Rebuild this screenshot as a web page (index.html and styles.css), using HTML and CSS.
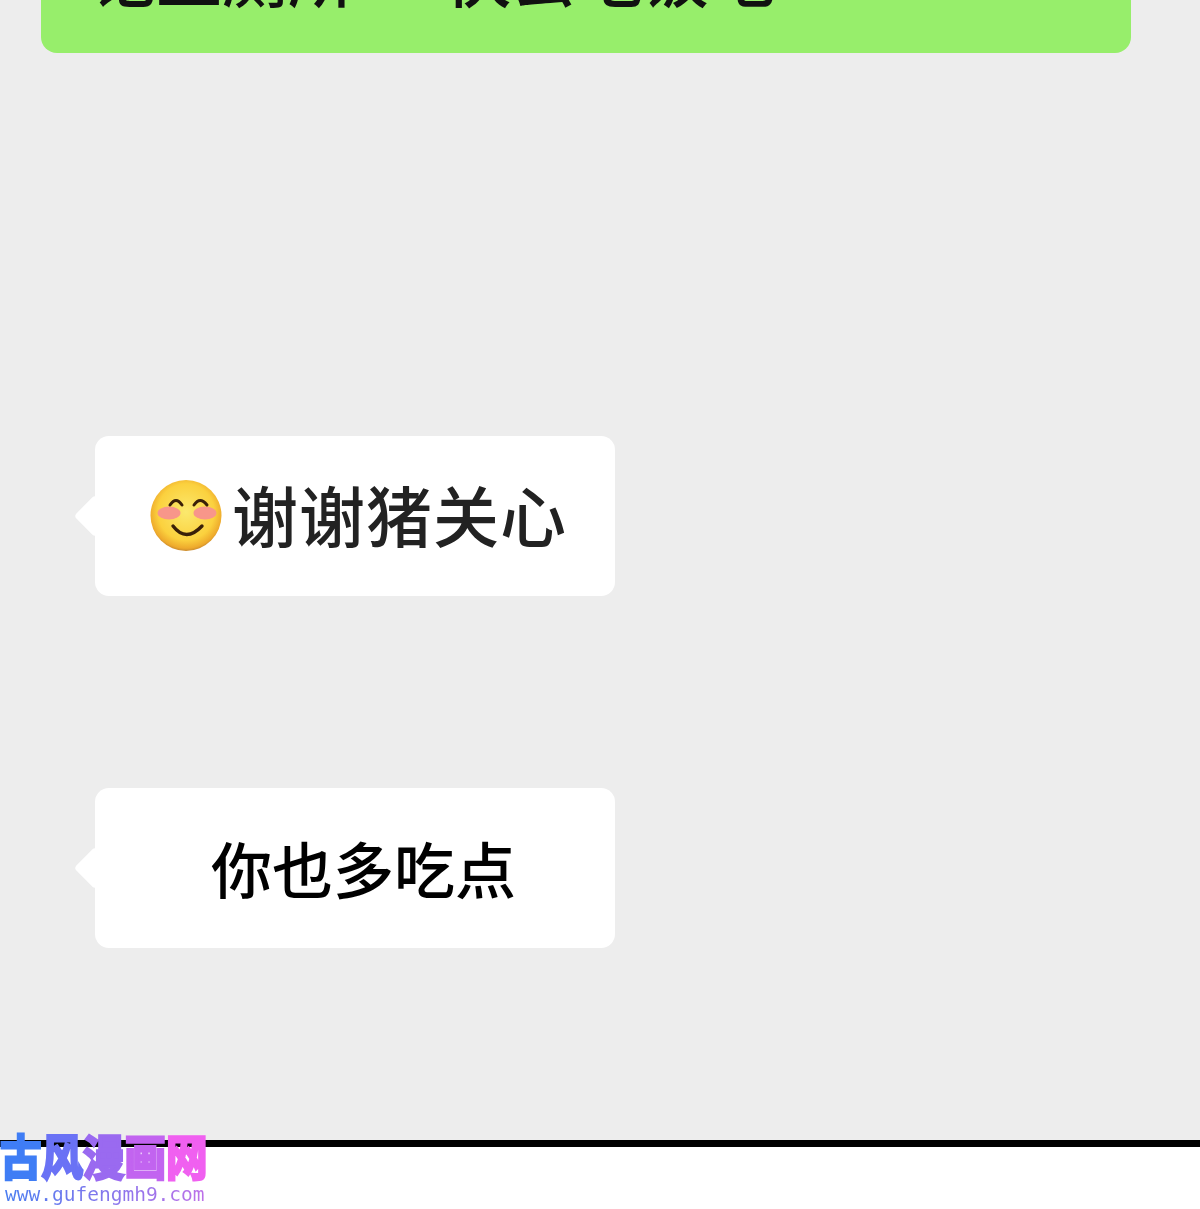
FILE: index.html
```html
<!DOCTYPE html>
<html lang="zh-CN">
<head>
  <meta charset="UTF-8" />
  <title>古风漫画网</title>
  <link rel="stylesheet" href="styles.css">
</head>
<body>
  <div class="chat">
    <div class="sent">
      <p class="sent-text">记上厕所<span class="sent-gap">快去吃饭吧</span></p>
    </div>

    <div class="msg msg-first">
      <div class="msg-body">
        <svg class="emoji" viewBox="0 0 72 72" aria-hidden="true">
          <defs>
            <radialGradient id="face" cx="50%" cy="45%" r="55%">
              <stop offset="0" stop-color="#fbe96e"/>
              <stop offset="0.72" stop-color="#fbd13e"/>
              <stop offset="0.93" stop-color="#eeaa2c"/>
              <stop offset="1" stop-color="#c98a2e"/>
            </radialGradient>
          </defs>
          <circle cx="36" cy="35.5" r="35.5" fill="url(#face)"/>
          <ellipse cx="19" cy="33" rx="11.5" ry="6.5" fill="#f8968a"/>
          <ellipse cx="55" cy="33" rx="11.5" ry="6.5" fill="#f8968a"/>
          <path d="M20 25q6-9 12 0M44 25q6-9 13 0" fill="none" stroke="#3a2008" stroke-width="3" stroke-linecap="round"/>
          <path d="M23 46q13 17 29 0" fill="none" stroke="#3a2008" stroke-width="3.4" stroke-linecap="round"/>
        </svg>
        <span class="msg-text thanks">谢谢猪关心</span>
      </div>
    </div>

    <div class="msg msg-second">
      <div class="msg-body center">
        <span class="msg-text">你也多吃点</span>
      </div>
    </div>
  </div>

  <div class="footer">
    <div class="mark">
      <div class="mark-title"><span class="c1">古</span><span class="c2">风</span><span class="c3">漫</span><span class="c4">画</span><span class="c5">网</span></div>
      <div class="mark-url">www.gufengmh9.com</div>
    </div>
  </div>
</body>
</html>
```

FILE: styles.css
```css
html, body { margin: 0; padding: 0; }
body { width: 1200px; height: 1209px; overflow: hidden; background: #fff; font-family: "Noto Sans CJK SC", "Noto Sans", sans-serif; }

.chat { height: 1140px; background: #ededed; overflow: hidden; box-sizing: border-box; padding-left: 41px; }

.sent { width: 1090px; height: 53px; background: #97ee6b; border-radius: 0 0 16px 16px; overflow: hidden; }
.sent-text { margin: -67px 0 0 49px; font-size: 66px; line-height: 80px; font-weight: 500; color: #111; white-space: nowrap; }
.sent-gap { margin-left: 91px; }

.msg { position: relative; width: 520px; height: 160px; margin-left: 54px; background: #fff; border-radius: 14px; }
.msg::before { content: ""; position: absolute; left: -15px; top: 65px; width: 30px; height: 30px; background: #fff; transform: rotate(45deg); border-radius: 4px; }
.msg-first { margin-top: 383px; }
.msg-second { margin-top: 192px; }

.msg-body { position: relative; display: flex; align-items: center; height: 100%; padding-left: 55px; }
.msg-body.center { padding-left: 116px; }

.emoji { width: 72px; height: 72px; margin-right: 10px; flex: none; }
.msg-text { position: relative; font-size: 61px; line-height: 80px; font-weight: 500; color: #000; white-space: nowrap; }
.msg-text.thanks { top: -3px; font-size: 66px; letter-spacing: 1px; color: #222; }

.footer { position: relative; height: 69px; box-sizing: border-box; border-top: 7px solid #000; background: #fff; }
.mark { position: absolute; left: 0; top: -18px; width: 210px; }
.mark-title { font-size: 41.5px; line-height: 44px; font-weight: 700; white-space: nowrap; transform: scaleY(1.14); transform-origin: top left; }
.mark-title span { -webkit-text-stroke: 2.5px currentColor; }
.c1 { color: #3f7df5; }
.c2 { color: #6a72f5; }
.c3 { color: #9a6af0; }
.c4 { color: #c264f0; }
.c5 { color: #f060f0; }
.mark-url { margin: 12px 0 0 5px; font-family: "DejaVu Sans Mono", monospace; font-size: 19.5px; line-height: 20px; white-space: nowrap; background: linear-gradient(90deg, #4a7df0, #c070e8); -webkit-background-clip: text; background-clip: text; color: transparent; }
```
